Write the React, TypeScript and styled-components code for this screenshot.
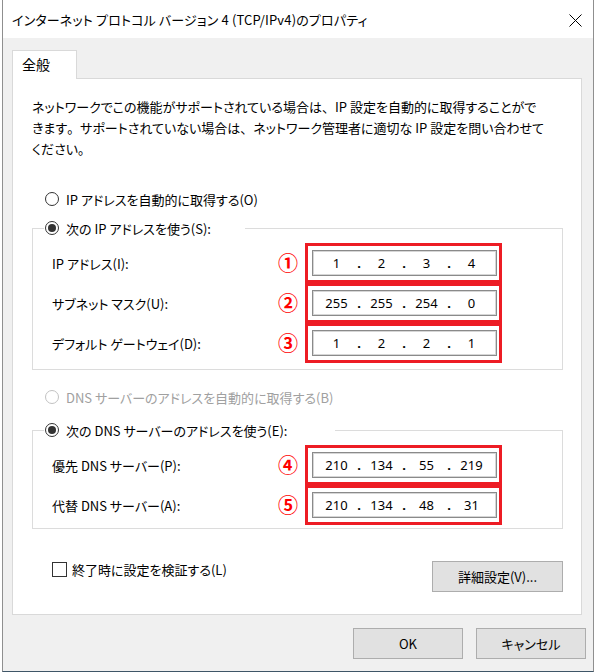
import React from 'react';
import styled, { createGlobalStyle } from 'styled-components';

const GlobalStyle = createGlobalStyle`
  html, body { margin: 0; padding: 0; background: #ffffff; }
  body {
    font-family: "Noto Sans CJK JP", "Noto Sans", sans-serif;
    font-size: 13px;
    color: #000;
    font-feature-settings: "palt";
  }
  * { box-sizing: border-box; }
`;

const Window = styled.div`
  margin-left: 2px;
  width: 592px;
  height: 672px;
  border-left: 1px solid #8f8f8f;
  border-right: 1px solid #8f8f8f;
  border-bottom: 1px solid #3e5567;
  background: #f0f0f0;
  display: flex;
  flex-direction: column;
`;

const TitleBar = styled.div`
  height: 38px;
  flex: none;
  background: #ffffff;
  display: flex;
  align-items: center;
  justify-content: space-between;
  padding: 0 11px 0 9px;
`;

const TitleText = styled.span`
  font-size: 13px;
  line-height: 20px;
  color: #000;
  margin-top: 2px;
  letter-spacing: 0.15px;
`;

const CloseIcon = styled.svg`
  width: 13px;
  height: 13px;
  margin-top: 2px;
`;

const Body = styled.div`
  flex: 1;
  display: flex;
  flex-direction: column;
  padding: 12px 0 0 9px;
`;

const TabStrip = styled.div`
  display: flex;
  height: 28px;
`;

const Tab = styled.div`
  position: relative;
  z-index: 1;
  width: 65px;
  height: 29px;
  background: #ffffff;
  border: 1px solid #d9d9d9;
  border-bottom: none;
  padding-left: 9px;
  line-height: 26px;
  font-size: 14px;
`;

const Panel = styled.div`
  width: 570px;
  height: 537px;
  background: #ffffff;
  border: 1px solid #d9d9d9;
  display: flex;
  flex-direction: column;
  padding: 17px 18px 0 19px;
`;

const Paragraph = styled.p`
  margin: 0;
  line-height: 21px;
  font-size: 13px;
  white-space: nowrap;
`;

const Punct = styled.span`
  font-feature-settings: normal;
`;

const RadioRow = styled.label<{ $disabled?: boolean; $mt?: number }>`
  display: flex;
  align-items: center;
  height: 20px;
  margin-top: ${(p) => p.$mt ?? 0}px;
  padding-left: 13px;
  gap: 7px;
  color: ${(p) => (p.$disabled ? '#a0a0a0' : '#000')};
  white-space: nowrap;
`;

const RadioCircle = styled.span<{ $checked?: boolean; $disabled?: boolean }>`
  width: 14px;
  height: 14px;
  border-radius: 50%;
  border: 1px solid ${(p) => (p.$disabled ? '#c2c2c2' : '#333333')};
  background: #fff;
  display: flex;
  align-items: center;
  justify-content: center;
  flex: none;
  &::after {
    content: '';
    display: ${(p) => (p.$checked ? 'block' : 'none')};
    width: 8px;
    height: 8px;
    border-radius: 50%;
    background: #333333;
  }
`;

const Group = styled.fieldset<{ $mt: number; $pb: number }>`
  margin: ${(p) => p.$mt}px 0 0 0;
  width: 531px;
  border: 1px solid #dcdcdc;
  padding: 5px 60px ${(p) => p.$pb}px 11px;
  min-width: 0;
`;

const Legend = styled.legend<{ $w: number }>`
  padding: 0;
  width: ${(p) => p.$w}px;
  height: 20px;
  display: flex;
  align-items: center;
  gap: 7px;
  padding-left: 1px;
  white-space: nowrap;
`;

const Rows = styled.div`
  padding-left: 8px;
  display: grid;
  grid-template-columns: 1fr 34px 197px;
  grid-auto-rows: 40px;
  align-items: center;
`;

const FieldLabel = styled.span`
  white-space: nowrap;
  font-size: 13px;
`;

const Marker = styled.span`
  color: #ff0000;
  font-weight: bold;
  font-size: 20px;
  text-align: center;
  line-height: 20px;
`;

const Highlight = styled.div`
  height: 40px;
  border: 3px solid #ed1c24;
  display: flex;
  align-items: center;
  padding: 0 2px 0 4px;
`;

const IpBox = styled.div`
  width: 185px;
  height: 26px;
  border: 1px solid #8a8a8a;
  box-shadow: inset 0 0 0 1px #d6d6d6;
  background: #fff;
  display: flex;
  align-items: center;
  padding-left: 5px;
  font-family: "Noto Sans", "Noto Sans CJK JP", sans-serif;
  font-size: 13px;
  color: #000;
`;

const Octet = styled.span`
  width: 37px;
  text-align: center;
`;

const Dot = styled.span`
  width: 8px;
  text-align: center;
  font-weight: bold;
`;

const Footer = styled.div`
  display: flex;
  justify-content: space-between;
  align-items: flex-start;
  margin-top: 30px;
`;

const CheckRow = styled.label`
  display: flex;
  align-items: center;
  height: 20px;
  gap: 5px;
  padding-left: 20px;
  white-space: nowrap;
`;

const CheckBox = styled.span`
  width: 15px;
  height: 15px;
  border: 1px solid #333;
  background: #fff;
  flex: none;
`;

const Button = styled.button<{ $w: number }>`
  width: ${(p) => p.$w}px;
  height: 31px;
  background: #e1e1e1;
  border: 1px solid #adadad;
  font-family: "Noto Sans CJK JP", "Noto Sans", sans-serif;
  font-feature-settings: "palt";
  font-size: 13px;
  color: #000;
  padding: 0;
  border-radius: 0;
`;

const AdvancedButton = styled(Button)`
  margin-top: 2px;
`;

const ButtonBar = styled.div`
  display: flex;
  justify-content: flex-end;
  gap: 13px;
  margin-top: 13px;
  padding-right: 7px;
`;

function IpField({ parts }: { parts: string[] }) {
  return (
    <IpBox>
      {parts.map((p, i) => (
        <React.Fragment key={i}>
          {i > 0 && <Dot>.</Dot>}
          <Octet>{p}</Octet>
        </React.Fragment>
      ))}
    </IpBox>
  );
}

type Row = { label: string; mark: string; parts: string[] };

const ipRows: Row[] = [
  { label: 'IP アドレス(I):', mark: '①', parts: ['1', '2', '3', '4'] },
  { label: 'サブネット マスク(U):', mark: '②', parts: ['255', '255', '254', '0'] },
  { label: 'デフォルト ゲートウェイ(D):', mark: '③', parts: ['1', '2', '2', '1'] },
];

const dnsRows: Row[] = [
  { label: '優先 DNS サーバー(P):', mark: '④', parts: ['210', '134', '55', '219'] },
  { label: '代替 DNS サーバー(A):', mark: '⑤', parts: ['210', '134', '48', '31'] },
];

function FieldRows({ rows }: { rows: Row[] }) {
  return (
    <Rows>
      {rows.map((r) => (
        <React.Fragment key={r.mark}>
          <FieldLabel>{r.label}</FieldLabel>
          <Marker>{r.mark}</Marker>
          <Highlight>
            <IpField parts={r.parts} />
          </Highlight>
        </React.Fragment>
      ))}
    </Rows>
  );
}

export default function App() {
  return (
    <>
      <GlobalStyle />
      <Window>
        <TitleBar>
          <TitleText>インターネット プロトコル バージョン 4 (TCP/IPv4)のプロパティ</TitleText>
          <CloseIcon viewBox="0 0 13 13">
            <path d="M0.5 0.5 L12.5 12.5 M12.5 0.5 L0.5 12.5" stroke="#000" strokeWidth="1" fill="none" />
          </CloseIcon>
        </TitleBar>
        <Body>
          <TabStrip>
            <Tab>全般</Tab>
          </TabStrip>
          <Panel>
            <Paragraph>
              ネットワークでこの機能がサポートされている場合は<Punct>、</Punct>IP 設定を自動的に取得することがで
              <br />
              きます<Punct>。</Punct>サポートされていない場合は<Punct>、</Punct>ネットワーク管理者に適切な IP 設定を問い合わせて
              <br />
              ください<Punct>。</Punct>
            </Paragraph>
            <RadioRow $mt={30}>
              <RadioCircle />
              IP アドレスを自動的に取得する(O)
            </RadioRow>
            <Group $mt={9} $pb={6}>
              <Legend $w={201}>
                <RadioCircle $checked />
                次の IP アドレスを使う(S):
              </Legend>
              <FieldRows rows={ipRows} />
            </Group>
            <RadioRow $mt={17} $disabled>
              <RadioCircle $disabled />
              DNS サーバーのアドレスを自動的に取得する(B)
            </RadioRow>
            <Group $mt={13} $pb={3}>
              <Legend $w={291}>
                <RadioCircle $checked />
                次の DNS サーバーのアドレスを使う(E):
              </Legend>
              <FieldRows rows={dnsRows} />
            </Group>
            <Footer>
              <CheckRow>
                <CheckBox />
                終了時に設定を検証する(L)
              </CheckRow>
              <AdvancedButton $w={131}>詳細設定(V)...</AdvancedButton>
            </Footer>
          </Panel>
          <ButtonBar>
            <Button $w={110}>OK</Button>
            <Button $w={110}>キャンセル</Button>
          </ButtonBar>
        </Body>
      </Window>
    </>
  );
}
